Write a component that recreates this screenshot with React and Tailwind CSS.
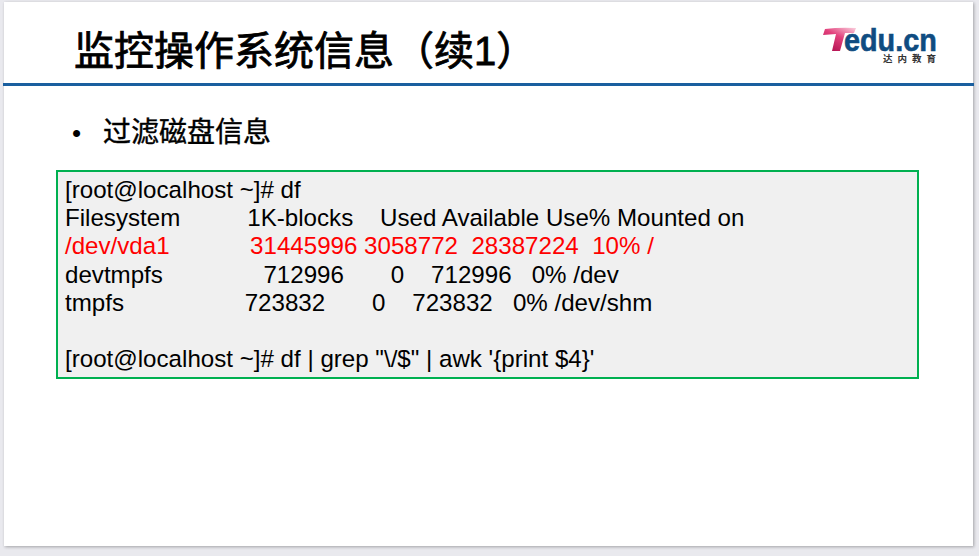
const sans = { fontFamily: '"Liberation Sans", "Noto Sans CJK SC", sans-serif' };

function Logo() {
  return (
    <div className="flex flex-col items-end w-[116px] mt-[24px] mr-[36px]">
      <svg width="116" height="27" viewBox="0 0 116 27" className="block overflow-visible">
        <defs>
          <linearGradient id="t" x1="0.2" y1="1" x2="0.9" y2="0">
            <stop offset="0" stopColor="#b0104f" />
            <stop offset="0.55" stopColor="#e2407c" />
            <stop offset="1" stopColor="#f9c4d6" />
          </linearGradient>
        </defs>
        <text transform="translate(22 25) scale(0.9 1)" fontFamily="Liberation Sans, sans-serif" fontWeight="700" fontSize="32" fill="#0f4c81" stroke="#0f4c81" strokeWidth="0.6">edu.cn</text>
        <path d="M3 3 Q18 1 34 2 L32 7 L23 7 L18 25 L10 25 L14 8 L1 9 Z" fill="url(#t)" />
      </svg>
      <div className="text-[9.5px] leading-[11px] font-bold text-[#333] tracking-[5px] mr-[-3px]" style={{ fontFamily: '"Noto Sans CJK SC", sans-serif' }}>达内教育</div>
    </div>
  );
}

export default function App() {
  return (
    <div className="w-[979px] h-[556px] bg-[#e9e9ee] pt-[2px] pl-[4px] overflow-hidden" style={sans}>
      <div className="w-[969px] h-[544px] bg-white shadow-[1px_1px_3px_rgba(0,0,0,0.3)]">
        <header className="flex justify-between -ml-[1px] w-[971px] border-b-[3px] border-[#1a5f9f] box-content h-[81px]">
          <h1 className="ml-[71px] mt-[25px] text-[40px] leading-[48px] font-normal text-black [-webkit-text-stroke:0.8px_black]">监控操作系统信息（续1）</h1>
          <Logo />
        </header>
        <div className="flex items-center mt-[29px] ml-[68px] text-[28px] leading-[36px] text-black">
          <span className="w-[31px] text-[26px]">•</span>
          <span className="[-webkit-text-stroke:0.4px_black]">过滤磁盘信息</span>
        </div>
        <pre className="ml-[52px] mt-[19px] w-[863px] h-[209px] border-[2px] border-[#00b050] bg-[#f0f0f0] pl-[7px] pt-[4px] text-[24.13px] leading-[28.2px] text-black whitespace-pre" style={sans}>
          {`[root@localhost ~]# df
Filesystem          1K-blocks    Used Available Use% Mounted on
`}<span className="text-[#ff0000]">{`/dev/vda1            31445996 3058772  28387224  10% /`}</span>{`
devtmpfs               712996       0    712996   0% /dev
tmpfs                  723832       0    723832   0% /dev/shm

[root@localhost ~]# df | grep "\\/$" | awk '{print $4}'`}
        </pre>
      </div>
    </div>
  );
}
